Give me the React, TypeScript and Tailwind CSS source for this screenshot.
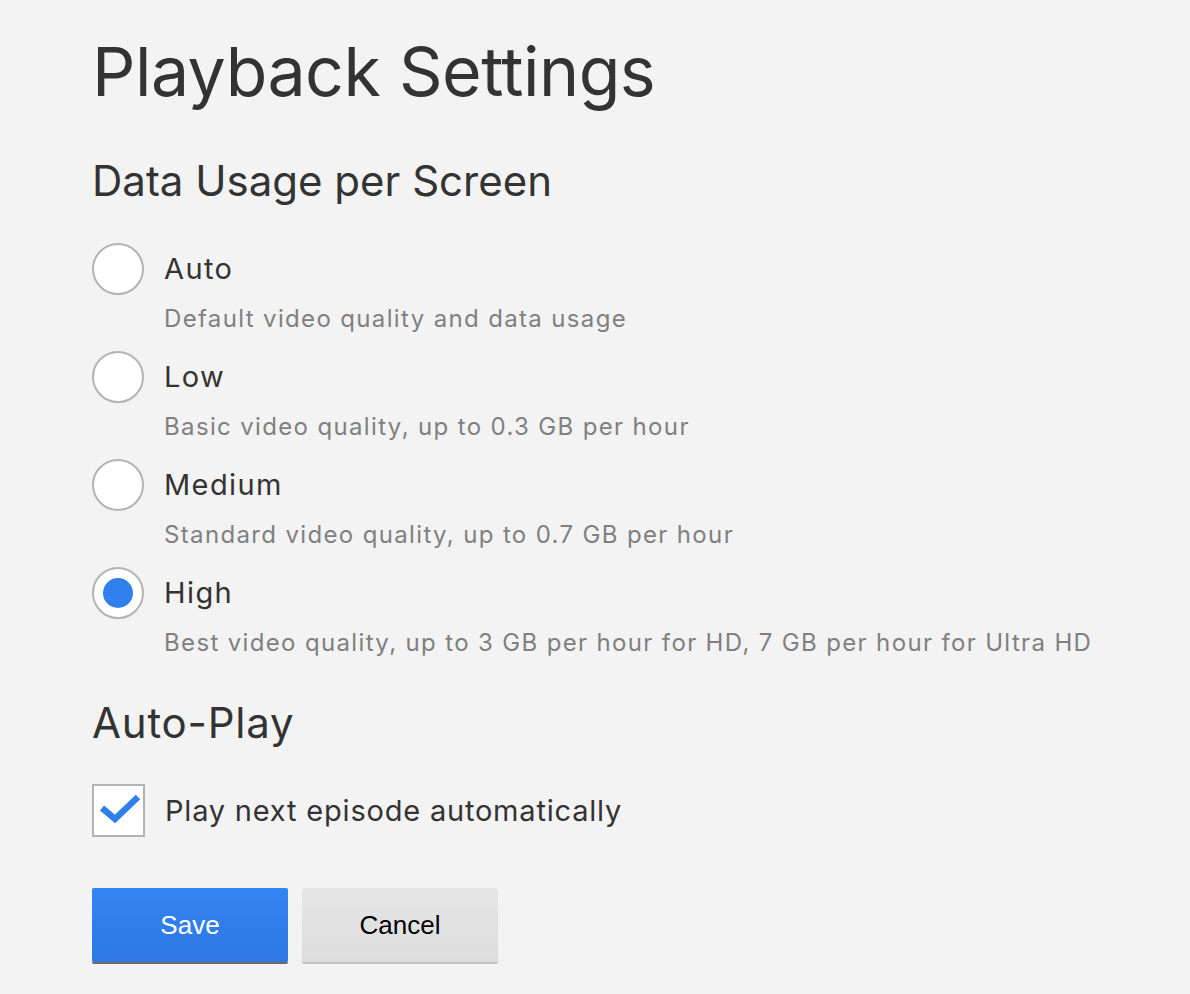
import { useState } from "react";

const OPTIONS = [
  { id: "auto", label: "Auto", desc: "Default video quality and data usage" },
  { id: "low", label: "Low", desc: "Basic video quality, up to 0.3 GB per hour" },
  { id: "medium", label: "Medium", desc: "Standard video quality, up to 0.7 GB per hour" },
  { id: "high", label: "High", desc: "Best video quality, up to 3 GB per hour for HD, 7 GB per hour for Ultra HD" },
];

function Radio({ checked }: { checked: boolean }) {
  return (
    <span className="w-[52px] h-[52px] shrink-0 rounded-full bg-white border-2 border-[#b3b3b3] flex items-center justify-center">
      {checked && <span className="w-[30px] h-[30px] rounded-full bg-[#2f80ed]" />}
    </span>
  );
}

function Checkbox({ checked }: { checked: boolean }) {
  return (
    <span className="w-[53px] h-[53px] shrink-0 bg-white border-2 border-[#b3b3b3] flex items-center justify-center">
      {checked && (
        <svg width="49" height="49" viewBox="0 0 49 49">
          <polyline points="8,22 21,33 44,11" fill="none" stroke="#2f80ed" strokeWidth="6.5" strokeLinecap="butt" strokeLinejoin="miter" />
        </svg>
      )}
    </span>
  );
}

export default function App() {
  const [quality, setQuality] = useState("high");
  const [autoPlay, setAutoPlay] = useState(true);

  return (
    <div className="min-h-screen w-full bg-[#f3f3f3] text-[#333] font-['Inter','Noto_Sans',sans-serif]">
      <div className="pl-[92px] pt-[31px]">
        <h1 className="text-[68px] leading-[80px] font-normal tracking-[-0.5px]">Playback Settings</h1>

        <h2 className="mt-[45px] text-[42px] leading-[50px] font-normal">Data Usage per Screen</h2>

        <div className="mt-[37px] flex flex-col gap-[17px]">
          {OPTIONS.map((o) => (
            <div key={o.id} className="flex flex-col cursor-pointer" onClick={() => setQuality(o.id)}>
              <div className="flex items-center gap-[20px] h-[52px]">
                <Radio checked={quality === o.id} />
                <span className="text-[29px] leading-[52px] tracking-[1.4px]">{o.label}</span>
              </div>
              <p className="ml-[72px] mt-[9px] text-[24px] leading-[30px] tracking-[1.35px] text-[#808080]">{o.desc}</p>
            </div>
          ))}
        </div>

        <h2 className="mt-[40px] text-[42px] leading-[50px] font-normal tracking-[0.8px]">Auto-Play</h2>

        <div className="mt-[36px] flex items-center gap-[20px] cursor-pointer" onClick={() => setAutoPlay(!autoPlay)}>
          <Checkbox checked={autoPlay} />
          <span className="text-[29px] leading-[53px] tracking-[0.8px]">Play next episode automatically</span>
        </div>

        <div className="mt-[51px] flex gap-[14px] font-['Liberation_Sans',Arial,sans-serif]">
          <button className="w-[196px] h-[74px] rounded-[2px] bg-gradient-to-b from-[#3484f2] to-[#2d78e3] text-white text-[26px] shadow-[0_2px_0_#6b6b6b]">
            Save
          </button>
          <button className="w-[196px] h-[74px] rounded-[2px] bg-gradient-to-b from-[#e6e6e6] to-[#dddddd] text-black text-[26px] shadow-[0_2px_0_#c2c2c2]">
            Cancel
          </button>
        </div>
      </div>
    </div>
  );
}
